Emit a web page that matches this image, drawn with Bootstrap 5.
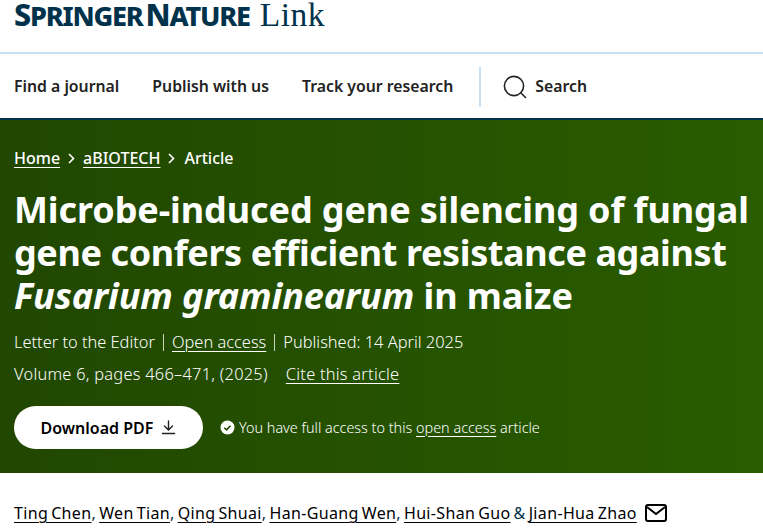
<!DOCTYPE html>
<html lang="en">
<head>
  <meta charset="UTF-8">
  <meta name="viewport" content="width=device-width, initial-scale=1.0">
  <title>Microbe-induced gene silencing | Springer Nature Link</title>
  <link href="https://cdn.jsdelivr.net/npm/bootstrap@5.3.2/dist/css/bootstrap.min.css" rel="stylesheet">
  <style>
    body {
      font-family: "Noto Sans", sans-serif;
      color: #222;
      overflow: hidden;
    }

    .brand-bar {
      height: 54px;
      padding: 0 14px;
      border-bottom: 2px solid #c5e0f4;
    }

    .brand-name {
      height: 33px;
      color: #01324b;
      font-weight: 800;
      line-height: 29px;
      letter-spacing: -1.2px;
      white-space: nowrap;
    }

    .brand-name .big-cap { font-size: 30.5px; }
    .brand-name .sm-cap { font-size: 27px; }

    .brand-link {
      margin-left: 10px;
      font-family: "Liberation Serif", serif;
      font-weight: 400;
      font-size: 33.5px;
      letter-spacing: 0.5px;
    }

    .menu-bar {
      height: 64px;
      padding: 1px 14px 0;
      font-size: 15.8px;
      font-weight: 600;
      color: #222;
    }

    .menu-item { margin-right: 33px; white-space: nowrap; }

    .menu-rule {
      width: 2px;
      height: 40px;
      margin: 0 22px 0 -7px;
      background: #c5e0f4;
    }

    .hero {
      height: 355px;
      padding: 27px 14px 0;
      color: #fff;
      background: linear-gradient(90deg, #214700 0%, #295c00 100%);
      border-top: 2px solid #01324b;
    }

    .hero a { color: #fff; text-underline-offset: 3px; text-decoration-thickness: 1px; }

    .crumbs { height: 22px; font-size: 16px; font-weight: 500; line-height: 22px; }
    .crumb-arrow { margin: 0 8px; }
    .crumb-last { margin-left: 1px; }

    .hero-title {
      margin: 19px 0 0;
      font-family: "Noto Sans", sans-serif;
      font-size: 36px;
      font-weight: 700;
      line-height: 43px;
      letter-spacing: -0.1px;
      white-space: nowrap;
    }

    .title-tight { letter-spacing: -0.4px; }

    .meta-line { font-size: 16.4px; line-height: 22px; font-weight: 300; white-space: nowrap; }
    .meta-first { margin-top: 14px; }
    .meta-second { margin-top: 10px; letter-spacing: 0.25px; }
    .meta-sep { width: 1px; height: 17px; margin: 0 8px; background: #c9d6bf; }
    .cite-link { margin-left: 18px; }

    .action-row { margin-top: 21px; }

    .dl-btn {
      width: 189px;
      height: 43px;
      color: #000;
      background: #fff;
      border-radius: 22px;
      font-size: 16px;
      font-weight: 600;
    }

    .access-icon { margin: 0 4px 0 17px; }
    .access-note { font-size: 14.4px; font-weight: 300; white-space: nowrap; }

    .author-line {
      padding: 28px 14px 0;
      font-size: 16px;
      letter-spacing: 0.35px;
      word-spacing: -1.5px;
      color: #01324b;
      white-space: nowrap;
    }

    .author-line a { color: #000; text-underline-offset: 3px; text-decoration-thickness: 1px; }
  </style>
</head>
<body>
  <header class="brand-bar">
    <div class="brand-name d-flex align-items-start">
      <span><span class="big-cap">S</span><span class="sm-cap">PRINGER</span> <span class="big-cap">N</span><span class="sm-cap">ATURE</span></span>
      <span class="brand-link">Link</span>
    </div>
  </header>

  <nav class="menu-bar d-flex align-items-center">
    <span class="menu-item">Find a journal</span>
    <span class="menu-item">Publish with us</span>
    <span class="menu-item">Track your research</span>
    <span class="menu-rule"></span>
    <svg width="24" height="24" viewBox="0 0 24 24" fill="none" stroke="#222" stroke-width="1.6" class="me-2">
      <circle cx="11" cy="11" r="9.6"/>
      <path d="M18 18l4.5 4.5" stroke-linecap="round"/>
    </svg>
    <span>Search</span>
  </nav>

  <section class="hero">
    <div class="crumbs d-flex align-items-center">
      <a href="#">Home</a>
      <svg class="crumb-arrow" width="7" height="11" viewBox="0 0 7 11" fill="none" stroke="#fff" stroke-width="1.6"><path d="M1 1l4.5 4.5L1 10"/></svg>
      <a href="#">aBIOTECH</a>
      <svg class="crumb-arrow" width="7" height="11" viewBox="0 0 7 11" fill="none" stroke="#fff" stroke-width="1.6"><path d="M1 1l4.5 4.5L1 10"/></svg>
      <span class="crumb-last">Article</span>
    </div>

    <h1 class="hero-title">Microbe-induced gene silencing of fungal<br><span class="title-tight">gene confers efficient resistance against</span><br><i>Fusarium graminearum</i> in maize</h1>

    <div class="meta-line meta-first d-flex align-items-center">
      <span>Letter to the Editor</span>
      <span class="meta-sep"></span>
      <a href="#">Open access</a>
      <span class="meta-sep"></span>
      <span>Published: 14 April 2025</span>
    </div>

    <div class="meta-line meta-second d-flex align-items-center">
      <span>Volume 6, pages 466–471, (2025)</span>
      <a href="#" class="cite-link">Cite this article</a>
    </div>

    <div class="action-row d-flex align-items-center">
      <div class="dl-btn d-flex align-items-center justify-content-center gap-2">
        <span>Download PDF</span>
        <svg width="15" height="15" viewBox="0 0 15 15" fill="none" stroke="#222" stroke-width="1.4">
          <path d="M7.5 1v8.5M3.5 6l4 4 4-4M1.5 13.5h12" stroke-linecap="round"/>
        </svg>
      </div>
      <svg class="access-icon" width="15" height="15" viewBox="0 0 15 15">
        <circle cx="7.5" cy="7.5" r="7" fill="#fff"/>
        <path d="M4.3 7.7l2.2 2.2 4-4.2" fill="none" stroke="#224800" stroke-width="1.6"/>
      </svg>
      <span class="access-note">You have full access to this <a href="#">open access</a> article</span>
    </div>
  </section>

  <div class="author-line d-flex align-items-center">
    <span><a href="#">Ting Chen</a>, <a href="#">Wen Tian</a>, <a href="#">Qing Shuai</a>, <a href="#">Han-Guang Wen</a>, <a href="#">Hui-Shan Guo</a> &amp; <a href="#">Jian-Hua Zhao</a></span>
    <svg class="ms-2" width="22" height="18" viewBox="0 0 22 18" fill="none" stroke="#000" stroke-width="2">
      <rect x="1" y="1" width="20" height="16" rx="2"/>
      <path d="M2 3l9 7 9-7"/>
    </svg>
  </div>
</body>
</html>
